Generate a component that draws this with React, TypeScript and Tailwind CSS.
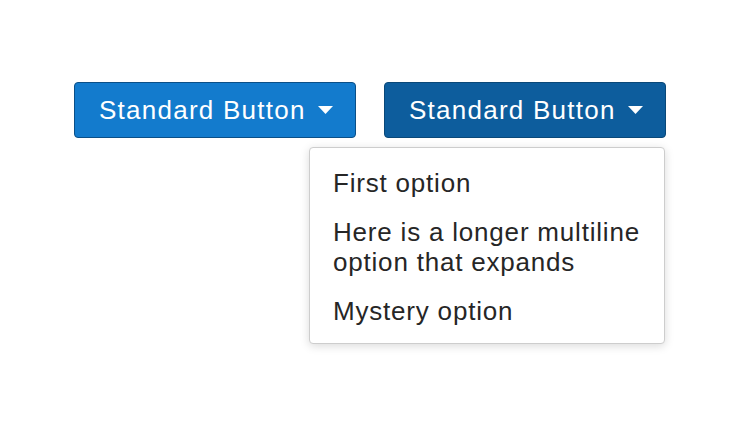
import { useState } from "react";

const font = "font-['Helvetica_Neue','Liberation_Sans',Arial,sans-serif]";

function Caret() {
  return (
    <svg width="15" height="8" viewBox="0 0 15 8" className="ml-[12px] shrink-0">
      <path d="M0 0 H15 L7.5 8 Z" fill="currentColor" />
    </svg>
  );
}

function DropButton({
  active,
  onClick,
}: {
  active?: boolean;
  onClick?: () => void;
}) {
  return (
    <button
      type="button"
      onClick={onClick}
      className={`flex items-center h-[56px] w-[282px] pl-[24px] pr-[23px] rounded-[4px] border text-white text-[26px] leading-[30px] tracking-[1.25px] ${
        active
          ? "bg-[#0d5d9d] border-[#0a4878]"
          : "bg-[#137bcd] border-[#0b4f87]"
      }`}
    >
      <span className="whitespace-nowrap">Standard Button</span>
      <Caret />
    </button>
  );
}

export default function App() {
  const [open, setOpen] = useState(true);
  const options = [
    <>First option</>,
    <>
      Here is a longer multiline
      <br />
      option that expands
    </>,
    <>Mystery option</>,
  ];

  return (
    <div className={`min-h-[426px] w-[740px] bg-white ${font}`}>
      <div className="flex gap-[28px] pl-[74px] pt-[82px]">
        <DropButton />
        <div className="relative">
          <DropButton active={open} onClick={() => setOpen(!open)} />
          {open && (
            <div className="absolute right-[1px] top-[65px] flex w-[356px] flex-col gap-[1px] rounded-[4px] border border-[#cdcdcd] bg-white pt-[11px] pb-[8px] shadow-[0_2px_10px_rgba(0,0,0,0.15)]">
              {options.map((opt, i) => (
                <div
                  key={i}
                  className="px-[23px] py-[9px] text-[26px] leading-[30px] tracking-[0.8px] text-[#262626] whitespace-nowrap"
                >
                  {opt}
                </div>
              ))}
            </div>
          )}
        </div>
      </div>
    </div>
  );
}
